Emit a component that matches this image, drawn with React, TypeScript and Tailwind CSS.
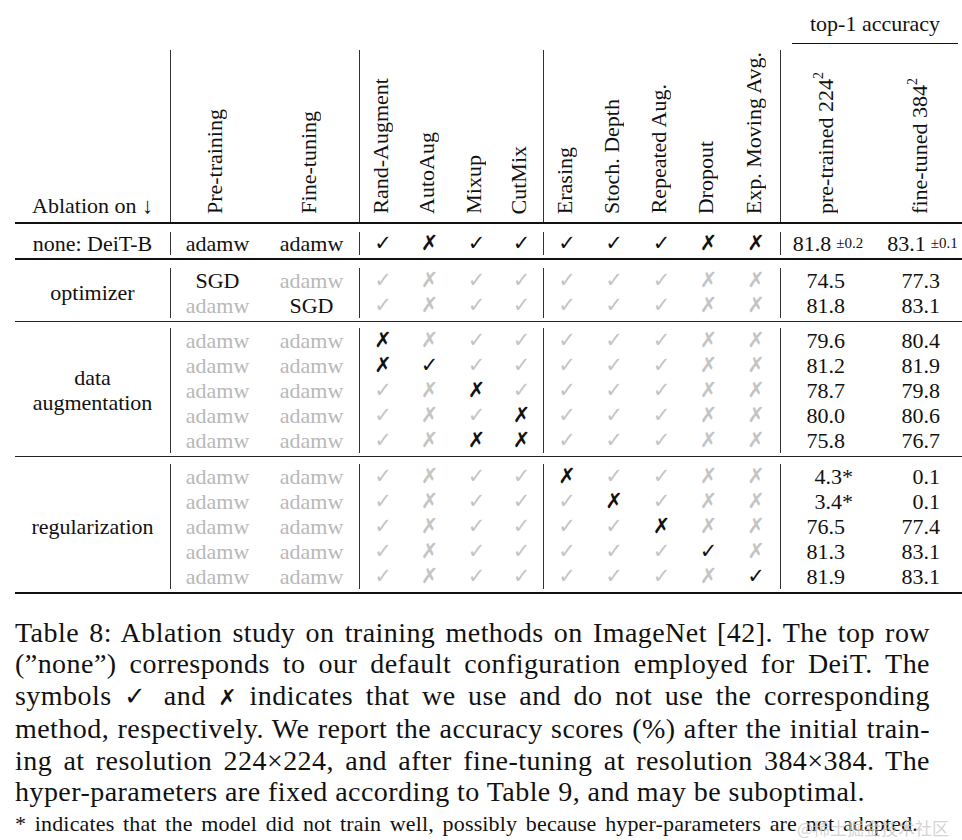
import React from 'react';

type Mark = 'c' | 'x';

// column order: Rand-Augment, AutoAug, Mixup, CutMix, Erasing, Stoch. Depth, Repeated Aug., Dropout, EMA
const defaults: Mark[] = ['c', 'x', 'c', 'c', 'c', 'c', 'c', 'x', 'x'];

interface Row {
  pre: string;
  fine: string;
  preOn?: boolean;
  fineOn?: boolean;
  on: Record<number, Mark>;
  top1: string;
  ft: string;
}

interface Group {
  label: React.ReactNode;
  rows: Row[];
  pt: string;
  pb: string;
}

const gridCols =
  'grid grid-cols-[155px_94px_95px_47px_47px_47px_43px_47px_48px_47px_47px_48px_95px_95px]';

const groups: Group[] = [
  {
    label: 'optimizer',
    pt: 'pt-[8px]',
    pb: 'pb-[3px]',
    rows: [
      { pre: 'SGD', fine: 'adamw', preOn: true, on: {}, top1: '74.5', ft: '77.3' },
      { pre: 'adamw', fine: 'SGD', fineOn: true, on: {}, top1: '81.8', ft: '83.1' },
    ],
  },
  {
    label: (
      <>
        data
        <br />
        augmentation
      </>
    ),
    pt: 'pt-[6px]',
    pb: 'pb-[3px]',
    rows: [
      { pre: 'adamw', fine: 'adamw', on: { 0: 'x' }, top1: '79.6', ft: '80.4' },
      { pre: 'adamw', fine: 'adamw', on: { 0: 'x', 1: 'c' }, top1: '81.2', ft: '81.9' },
      { pre: 'adamw', fine: 'adamw', on: { 2: 'x' }, top1: '78.7', ft: '79.8' },
      { pre: 'adamw', fine: 'adamw', on: { 3: 'x' }, top1: '80.0', ft: '80.6' },
      { pre: 'adamw', fine: 'adamw', on: { 2: 'x', 3: 'x' }, top1: '75.8', ft: '76.7' },
    ],
  },
  {
    label: 'regularization',
    pt: 'pt-[7px]',
    pb: 'pb-[3px]',
    rows: [
      { pre: 'adamw', fine: 'adamw', on: { 4: 'x' }, top1: '4.3*', ft: '0.1' },
      { pre: 'adamw', fine: 'adamw', on: { 5: 'x' }, top1: '3.4*', ft: '0.1' },
      { pre: 'adamw', fine: 'adamw', on: { 6: 'x' }, top1: '76.5', ft: '77.4' },
      { pre: 'adamw', fine: 'adamw', on: { 7: 'c' }, top1: '81.3', ft: '83.1' },
      { pre: 'adamw', fine: 'adamw', on: { 8: 'c' }, top1: '81.9', ft: '83.1' },
    ],
  },
];

const headers = [
  'Rand-Augment',
  'AutoAug',
  'Mixup',
  'CutMix',
  'Erasing',
  'Stoch. Depth',
  'Repeated Aug.',
  'Dropout',
  'Exp. Moving Avg.',
];

const VLabel = ({ children }: { children: React.ReactNode }) => (
  <span className="[writing-mode:vertical-rl] rotate-180 whitespace-nowrap leading-[26px] mr-[5px]">
    {children}
  </span>
);

// superscript inside rotated text: shift towards the glyph tops
const VSup = ({ children }: { children: React.ReactNode }) => (
  <span className="relative left-[7px] text-[14px]">{children}</span>
);

const Sym = ({ m, dark }: { m: Mark; dark: boolean }) => (
  <span
    className={`font-['DejaVu_Sans',sans-serif] text-[21px] ${dark ? 'text-[#111]' : 'text-[#c4c4c4]'}`}
  >
    {m === 'c' ? '✓' : '✗'}
  </span>
);

const cell = 'flex items-center justify-center';
const sepCol = (i: number) => (i === 0 || i === 4 ? 'border-l border-[#333]' : '');

function Top1({ v }: { v: string }) {
  if (v.endsWith('*')) {
    return (
      <span>
        {v.slice(0, -1)}
        <span className="-mr-[8px]">*</span>
      </span>
    );
  }
  return <span>{v}</span>;
}

export default function App() {
  return (
    <div className="relative w-[962px] h-[840px] overflow-hidden bg-white text-[#111] font-['Liberation_Serif','Times_New_Roman',serif]">
      <div className="ml-[15px] w-[955px]">
        {/* top-1 accuracy */}
        <div className="flex">
          <div className="w-[765px]" />
          <div className="w-[190px] flex flex-col">
            <div className="h-[43px] pt-[11px] text-center text-[22px] leading-[26px]">top-1 accuracy</div>
            <div className="h-px bg-[#111] mx-[12px]" />
          </div>
        </div>

        {/* rotated headers */}
        <div className={`${gridCols} mt-[6px] h-[172px] text-[22px]`}>
          <div className="flex items-end justify-center pb-[3px] leading-[26px]">Ablation on ↓</div>
          <div className="flex items-end justify-center pb-[8px] border-l border-[#333]">
            <VLabel>Pre-training</VLabel>
          </div>
          <div className="flex items-end justify-center pb-[8px]">
            <VLabel>Fine-tuning</VLabel>
          </div>
          {headers.map((h, i) => (
            <div key={h} className={`flex items-end justify-center pb-[8px] ${sepCol(i)}`}>
              <VLabel>{h}</VLabel>
            </div>
          ))}
          <div className="flex items-end justify-center pb-[8px] border-l border-[#333]">
            <VLabel>
              pre-trained 224<VSup>2</VSup>
            </VLabel>
          </div>
          <div className="flex items-end justify-center pb-[8px]">
            <VLabel>
              fine-tuned 384<VSup>2</VSup>
            </VLabel>
          </div>
        </div>
        <div className="h-[2px] bg-[#111]" />

        {/* baseline row */}
        <div className={`${gridCols} auto-rows-[23px] pt-[8px] pb-[3px] text-[22px] leading-[23px]`}>
          <div className={cell}>none: DeiT-B</div>
          <div className={`${cell} border-l border-[#333]`}>adamw</div>
          <div className={cell}>adamw</div>
          {defaults.map((m, i) => (
            <div key={i} className={`${cell} ${sepCol(i)}`}>
              <Sym m={m} dark />
            </div>
          ))}
          <div className={`${cell} border-l border-[#333]`}>
            81.8<span className="ml-[5px] text-[15px]">±0.2</span>
          </div>
          <div className={cell}>
            83.1<span className="ml-[5px] text-[15px]">±0.1</span>
          </div>
        </div>
        <div className="h-[1.5px] bg-[#111]" />

        {groups.map((g, gi) => (
          <React.Fragment key={gi}>
            <div className={`${gridCols} auto-rows-[25px] ${g.pt} ${g.pb} text-[22px] leading-[25px]`}>
              <div
                className={`${cell} text-center leading-[25px] ${g.rows.length === 2 ? 'row-span-2' : 'row-span-5'}`}
              >
                <div>{g.label}</div>
              </div>
              {g.rows.map((r, ri) => (
                <React.Fragment key={ri}>
                  <div
                    className={`${cell} col-start-2 border-l border-[#333] ${r.preOn ? 'text-[#111]' : 'text-[#b8b8b8]'}`}
                  >
                    {r.pre}
                  </div>
                  <div className={`${cell} ${r.fineOn ? 'text-[#111]' : 'text-[#b8b8b8]'}`}>{r.fine}</div>
                  {defaults.map((m, i) => (
                    <div key={i} className={`${cell} ${sepCol(i)}`}>
                      <Sym m={r.on[i] ?? m} dark={r.on[i] !== undefined} />
                    </div>
                  ))}
                  <div className="flex items-center justify-end pr-[30px] border-l border-[#333]">
                    <Top1 v={r.top1} />
                  </div>
                  <div className="flex items-center justify-end pr-[30px]">{r.ft}</div>
                </React.Fragment>
              ))}
            </div>
            <div className={gi === groups.length - 1 ? 'h-[2px] bg-[#111]' : 'h-px bg-[#222]'} />
          </React.Fragment>
        ))}
      </div>

      {/* caption */}
      <div className="ml-[15px] w-[915px] mt-[23px] text-[28px] leading-[31.5px] tracking-[0.45px]">
        <div className="text-justify [text-align-last:justify]">
          Table 8: Ablation study on training methods on ImageNet [42]. The top row
        </div>
        <div className="text-justify [text-align-last:justify]">
          (”none”) corresponds to our default configuration employed for DeiT. The
        </div>
        <div className="text-justify [text-align-last:justify]">
          symbols <span className="font-['DejaVu_Sans',sans-serif] text-[26px]">✓</span> and{' '}
          <span className="font-['DejaVu_Sans',sans-serif] text-[22px]">✗</span> indicates that we use and do not use the
          corresponding
        </div>
        <div className="text-justify [text-align-last:justify]">
          method, respectively. We report the accuracy scores (%) after the initial train-
        </div>
        <div className="text-justify [text-align-last:justify]">
          ing at resolution 224×224, and after fine-tuning at resolution 384×384. The
        </div>
        <div>hyper-parameters are fixed according to Table 9, and may be suboptimal.</div>
        <div className="mt-[3px] w-[903px] text-[22px] leading-[26px] tracking-[0.15px] text-justify [text-align-last:justify]">
          * indicates that the model did not train well, possibly because hyper-parameters are not adapted.
        </div>
      </div>

      <div className="absolute left-[797px] top-[817px] text-[17px] leading-[22px] text-[#c8c8c8]/80 font-['Noto_Sans_CJK_SC',sans-serif]">
        @稀土掘金技术社区
      </div>
    </div>
  );
}
